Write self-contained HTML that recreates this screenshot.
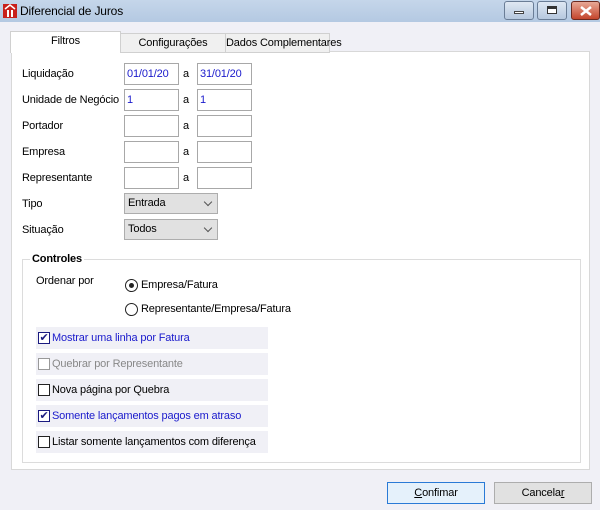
<!DOCTYPE html>
<html><head><meta charset="utf-8"><style>
*{box-sizing:border-box;margin:0;padding:0}
body{width:600px;height:510px;overflow:hidden;background:#f0f0f6;font-family:"Liberation Sans","DejaVu Sans",sans-serif;font-size:11px;letter-spacing:-0.15px;color:#000;position:relative;white-space:nowrap}
.a{position:absolute}
#title{left:0;top:0;width:600px;height:22px;background:linear-gradient(#c5d6ea,#b4c9e2)}
.tb{top:1px;height:19px;border:1px solid #6a7d96;border-radius:3px;background:linear-gradient(#dfe8f3,#b6c8de)}
.tab{height:20px;border:1px solid #d0d0d0;background:#f0f0f0;text-align:center;line-height:18px}
#panel{left:11px;top:51px;width:579px;height:419px;background:#fff;border:1px solid #d8d8d8}
.inp{width:55px;height:22px;border:1px solid #a8a8a8;background:#fff;color:#1a1acc;padding-left:2px;line-height:20px}
.cmb{width:94px;height:21px;border:1px solid #adadad;background:#e1e1e1;padding-left:3px;line-height:19px}
.cmb:after{content:"";position:absolute;right:6px;top:5px;width:5px;height:5px;border-right:1px solid #555;border-bottom:1px solid #555;transform:rotate(45deg)}
.chk{left:36px;width:232px;height:22px;background:#f0f0f6;line-height:22px;padding-left:16px}
.box{position:absolute;left:2px;top:5px;width:12px;height:12px;border:1px solid #222;background:#fff}
.rad{width:13px;height:13px;border:1px solid #222;border-radius:50%;background:#fff}
.btn{top:482px;width:98px;height:22px;text-align:center;line-height:20px}
</style></head><body>
<div id="title" class="a"></div>
<svg class="a" style="left:3px;top:4px" width="14" height="14"><rect width="14" height="14" fill="#c8201c"/><path d="M2 5 L7 1 L12 5" stroke="#fff" fill="none" stroke-width="1.5"/><path d="M5 6v7M9 6v7" stroke="#fff" stroke-width="2"/></svg>
<div class="a" style="left:20px;top:4px;font-size:12px">Diferencial de Juros</div>
<div class="a tb" style="left:504px;width:30px"><div class="a" style="left:9px;top:9px;width:10px;height:3px;background:#fff;border:1px solid #444"></div></div>
<div class="a tb" style="left:537px;width:30px"><div class="a" style="left:9px;top:4px;width:10px;height:8px;border:1px solid #333;border-top-width:3px;background:#fff"></div></div>
<div class="a" style="left:571px;top:1px;width:29px;height:19px;border:1px solid #6b2a20;border-radius:3px;background:linear-gradient(#e7a896,#c4452c)">
<svg class="a" style="left:8px;top:4px" width="12" height="10"><path d="M1 1L11 9M11 1L1 9" stroke="#fff" stroke-width="2.5"/></svg></div>
<div id="panel" class="a"></div>
<div class="a tab" style="left:120px;top:33px;width:106px">Configurações</div>
<div class="a tab" style="left:225px;top:33px;width:105px">Dados Complementares</div>
<div class="a tab" style="left:10px;top:31px;width:111px;height:22px;background:#fff;border-bottom:none">Filtros</div>

<div class="a" style="left:22px;top:68px">Liquidação</div>
<div class="a" style="left:22px;top:94px">Unidade de Negócio</div>
<div class="a" style="left:22px;top:120px">Portador</div>
<div class="a" style="left:22px;top:146px">Empresa</div>
<div class="a" style="left:22px;top:172px">Representante</div>
<div class="a" style="left:22px;top:198px">Tipo</div>
<div class="a" style="left:22px;top:224px">Situação</div>

<div class="a inp" style="left:124px;top:63px">01/01/20</div><div class="a" style="left:183px;top:68px">a</div><div class="a inp" style="left:197px;top:63px">31/01/20</div>
<div class="a inp" style="left:124px;top:89px">1</div><div class="a" style="left:183px;top:94px">a</div><div class="a inp" style="left:197px;top:89px">1</div>
<div class="a inp" style="left:124px;top:115px"></div><div class="a" style="left:183px;top:120px">a</div><div class="a inp" style="left:197px;top:115px"></div>
<div class="a inp" style="left:124px;top:141px"></div><div class="a" style="left:183px;top:146px">a</div><div class="a inp" style="left:197px;top:141px"></div>
<div class="a inp" style="left:124px;top:167px"></div><div class="a" style="left:183px;top:172px">a</div><div class="a inp" style="left:197px;top:167px"></div>
<div class="a cmb" style="left:124px;top:193px">Entrada</div>
<div class="a cmb" style="left:124px;top:219px">Todos</div>

<div class="a" style="left:22px;top:259px;width:559px;height:204px;border:1px solid #dcdcdc"></div>
<div class="a" style="left:30px;top:253px;background:#fff;padding:0 2px;font-weight:bold">Controles</div>
<div class="a" style="left:36px;top:275px">Ordenar por</div>
<div class="a rad" style="left:125px;top:279px"><div class="a" style="left:3px;top:3px;width:5px;height:5px;border-radius:50%;background:#222"></div></div>
<div class="a" style="left:141px;top:279px">Empresa/Fatura</div>
<div class="a rad" style="left:125px;top:303px"></div>
<div class="a" style="left:141px;top:303px">Representante/Empresa/Fatura</div>

<div class="a chk" style="top:327px;color:#1a1acc"><div class="box" style="border-color:#1a1a80;color:#1a1a80;font-size:11px;line-height:10px;text-align:center">✔</div>Mostrar uma linha por Fatura</div>
<div class="a chk" style="top:353px;color:#888"><div class="box" style="border-color:#999"></div>Quebrar por Representante</div>
<div class="a chk" style="top:379px"><div class="box"></div>Nova página por Quebra</div>
<div class="a chk" style="top:405px;color:#1a1acc"><div class="box" style="border-color:#1a1a80;color:#1a1a80;font-size:11px;line-height:10px;text-align:center">✔</div>Somente lançamentos pagos em atraso</div>
<div class="a chk" style="top:431px"><div class="box"></div>Listar somente lançamentos com diferença</div>

<div class="a btn" style="left:387px;border:1px solid #2a7ad6;background:#e5f1fb"><u>C</u>onfimar</div>
<div class="a btn" style="left:494px;border:1px solid #adadad;background:#e1e1e1">Cancela<u>r</u></div>
</body></html>
